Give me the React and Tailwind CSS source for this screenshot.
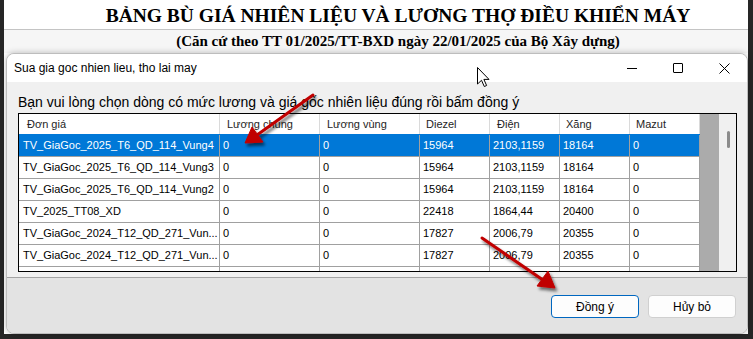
import React from "react";

const cols = [
  { key: "name", label: "Đơn giá", w: "w-[201px]", hp: "pl-[8px]" },
  { key: "lc", label: "Lương chung", w: "w-[100px]", hp: "pl-[7px]" },
  { key: "lv", label: "Lương vùng", w: "w-[100px]", hp: "pl-[7px]" },
  { key: "dz", label: "Diezel", w: "w-[70px]", hp: "pl-[6px]" },
  { key: "dn", label: "Điện", w: "w-[70px]", hp: "pl-[7px]" },
  { key: "xg", label: "Xăng", w: "w-[70px]", hp: "pl-[6px]" },
  { key: "mz", label: "Mazut", w: "w-[70px]", hp: "pl-[6px]" },
];

const rows = [
  ["TV_GiaGoc_2025_T6_QD_114_Vung4", "0", "0", "15964", "2103,1159", "18164", "0"],
  ["TV_GiaGoc_2025_T6_QD_114_Vung3", "0", "0", "15964", "2103,1159", "18164", "0"],
  ["TV_GiaGoc_2025_T6_QD_114_Vung2", "0", "0", "15964", "2103,1159", "18164", "0"],
  ["TV_2025_TT08_XD", "0", "0", "22418", "1864,44", "20400", "0"],
  ["TV_GiaGoc_2024_T12_QD_271_Vun...", "0", "0", "17827", "2006,79", "20355", "0"],
  ["TV_GiaGoc_2024_T12_QD_271_Vun...", "0", "0", "17827", "2006,79", "20355", "0"],
  ["", "", "", "", "", "", ""],
];

function Grid() {
  return (
    <div className="w-[719px] h-[159px] border border-black flex overflow-hidden bg-[#ababab]">
      <div className="w-[681px] flex flex-col shrink-0">
        <div className="flex h-[20px] bg-white shrink-0">
          {cols.map((c) => (
            <div
              key={c.key}
              className={`${c.w} ${c.hp} shrink-0 h-full flex items-center text-[11px] text-[#1e1e1e] border-r border-[#dadada]`}
            >
              {c.label}
            </div>
          ))}
        </div>
        {rows.map((r, ri) => {
          const sel = ri === 0;
          return (
            <div
              key={ri}
              className={`flex h-[22px] shrink-0 border-t ${sel ? "bg-[#0078d7] text-white border-[#0078d7]" : "bg-white text-black border-[#a0a0a0]"}`}
            >
              {r.map((v, ci) => (
                <div
                  key={ci}
                  className={`${cols[ci].w} shrink-0 h-full flex items-center text-[11px] border-r border-[#a0a0a0] ${ci === 0 ? "pl-[4px]" : "pl-[3px]"} whitespace-nowrap overflow-hidden`}
                >
                  {v}
                </div>
              ))}
            </div>
          );
        })}
      </div>
      <div className="w-[19px] shrink-0 bg-[#ababab]" />
      <div className="w-[17px] shrink-0 bg-[#f0f0f0] pt-[17px] flex justify-center">
        <div className="w-[3px] h-[17px] bg-[#8b8b8b] rounded-full ml-[1px]" />
      </div>
    </div>
  );
}

function Overlay() {
  return (
    <svg
      className="absolute left-0 top-0 pointer-events-none"
      width="753"
      height="339"
      viewBox="0 0 753 339"
    >
      <defs>
        <filter id="sh" x="-20%" y="-20%" width="140%" height="140%">
          <feGaussianBlur in="SourceAlpha" stdDeviation="1.6" />
          <feOffset dx="2" dy="3" result="ob" />
          <feComponentTransfer>
            <feFuncA type="linear" slope="0.55" />
          </feComponentTransfer>
          <feMerge>
            <feMergeNode />
            <feMergeNode in="SourceGraphic" />
          </feMerge>
        </filter>
      </defs>
      <g filter="url(#sh)" fill="#c00000" stroke="#c00000">
        <line x1="313" y1="95" x2="257" y2="135" strokeWidth="3" strokeLinecap="round" />
        <polygon points="245,143 252,127 263,142" strokeWidth="1" strokeLinejoin="round" />
        <line x1="482" y1="238" x2="543" y2="280" strokeWidth="3" strokeLinecap="round" />
        <polygon points="555,288 537,286 548,271" strokeWidth="1" strokeLinejoin="round" />
      </g>
      <path
        d="M477.5 67.5 L477.5 84 L481.5 80.3 L484.3 86.5 L486.6 85.5 L483.9 79.4 L489 79.4 Z"
        fill="#fff"
        stroke="#000"
        strokeWidth="1"
        strokeLinejoin="miter"
      />
    </svg>
  );
}

export default function App() {
  return (
    <div
      className="relative w-[753px] h-[339px] bg-[#262626] pl-[4px] pr-[5px] pb-[5px] flex overflow-hidden"
      style={{ fontFamily: '"Liberation Sans", Arial, sans-serif' }}
    >
      <div className="flex-1 flex flex-col bg-white">
        <div className="h-[30px] flex items-center justify-center pl-[44px] pt-[2px] border-b border-[#c4c4c4]">
          <div
            className="text-[19.5px] font-bold text-black leading-none whitespace-nowrap"
            style={{ fontFamily: '"Liberation Serif", "Times New Roman", serif' }}
          >
            BẢNG BÙ GIÁ NHIÊN LIỆU VÀ LƯƠNG THỢ ĐIỀU KHIỂN MÁY
          </div>
        </div>
        <div className="h-[23px] flex items-start justify-center pl-[44px] pt-[4px] bg-[#f6f6f6]">
          <div
            className="text-[15px] font-bold text-black leading-none whitespace-nowrap"
            style={{ fontFamily: '"Liberation Serif", "Times New Roman", serif' }}
          >
            (Căn cứ theo TT 01/2025/TT-BXD ngày 22/01/2025 của Bộ Xây dựng)
          </div>
        </div>
        <div className="flex-1 ml-[2px] flex flex-col rounded-[8px] border border-[#bdbdbd] overflow-hidden bg-[#f0f0f0] shadow-[0_0_6px_rgba(0,0,0,0.25)]">
          <div className="h-[28px] bg-white flex items-center shrink-0">
            <div className="pl-[7px] text-[12px] text-black flex-1 whitespace-nowrap">
              Sua gia goc nhien lieu, tho lai may
            </div>
            <div className="flex h-full">
              <div className="w-[46px] h-full flex items-center justify-center">
                <div className="w-[10px] h-px bg-black" />
              </div>
              <div className="w-[46px] h-full flex items-center justify-center">
                <div className="w-[10px] h-[10px] border border-black rounded-[1px]" />
              </div>
              <div className="w-[46px] h-full flex items-center justify-center">
                <svg width="11" height="11" viewBox="0 0 11 11">
                  <path d="M0.5 0.5 L10.5 10.5 M10.5 0.5 L0.5 10.5" stroke="#000" strokeWidth="1" />
                </svg>
              </div>
            </div>
          </div>
          <div className="flex-1 flex flex-col pl-[11px] pt-[12px]">
            <div className="text-[14px] leading-[17px] text-black whitespace-nowrap">
              Bạn vui lòng chọn dòng có mức lương và giá gốc nhiên liệu đúng rồi bấm đồng ý
            </div>
            <div className="mt-[2px]">
              <Grid />
            </div>
          </div>
          <div className="h-[56px] shrink-0 bg-[#e3e3e3] border-t border-[#a3a3a3] flex justify-end items-start pt-[17px] pr-[11px] gap-[9px]">
            <button className="w-[88px] h-[23px] rounded-[4px] bg-[#fdfdfd] border border-[#0067c0] text-[12px] text-black flex items-center justify-center">
              Đồng ý
            </button>
            <button className="w-[88px] h-[23px] rounded-[4px] bg-[#fdfdfd] border border-[#d0d0d0] text-[12px] text-black flex items-center justify-center">
              Hủy bỏ
            </button>
          </div>
        </div>
      </div>
      <Overlay />
    </div>
  );
}
